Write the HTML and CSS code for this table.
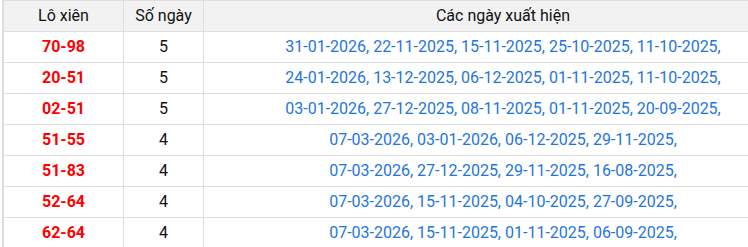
FILE: index.html
```html
<!DOCTYPE html>
<html lang="vi">
<head>
<meta charset="utf-8">
<link rel="stylesheet" href="styles.css">
</head>
<body>
<div class="wrap">
<table class="lx">
  <thead>
    <tr><th class="c1">Lô xiên</th><th class="c2">Số ngày</th><th class="c3">Các ngày xuất hiện</th></tr>
  </thead>
  <tbody>
    <tr><td class="pair">70-98</td><td class="num">5</td><td class="dates">31-01-2026, 22-11-2025, 15-11-2025, 25-10-2025, 11-10-2025,</td></tr>
    <tr><td class="pair">20-51</td><td class="num">5</td><td class="dates">24-01-2026, 13-12-2025, 06-12-2025, 01-11-2025, 11-10-2025,</td></tr>
    <tr><td class="pair">02-51</td><td class="num">5</td><td class="dates">03-01-2026, 27-12-2025, 08-11-2025, 01-11-2025, 20-09-2025,</td></tr>
    <tr><td class="pair">51-55</td><td class="num">4</td><td class="dates">07-03-2026, 03-01-2026, 06-12-2025, 29-11-2025,</td></tr>
    <tr><td class="pair">51-83</td><td class="num">4</td><td class="dates">07-03-2026, 27-12-2025, 29-11-2025, 16-08-2025,</td></tr>
    <tr><td class="pair">52-64</td><td class="num">4</td><td class="dates">07-03-2026, 15-11-2025, 04-10-2025, 27-09-2025,</td></tr>
    <tr><td class="pair">62-64</td><td class="num">4</td><td class="dates">07-03-2026, 15-11-2025, 01-11-2025, 06-09-2025,</td></tr>
  </tbody>
</table>
</div>
</body>
</html>
```
FILE: styles.css
```css
html, body {
  margin: 0;
  padding: 0;
  background: #fff;
  overflow: hidden;
}
.wrap {
  padding-left: 2px;
  width: 746px;
  height: 247px;
  overflow: hidden;
}
.lx {
  border-collapse: collapse;
  width: 801px;
  table-layout: fixed;
  font-family: Roboto, "Liberation Sans", sans-serif;
  font-size: 16px;
  color: #111;
  border-left: 2px solid #ddd;
}
.lx th, .lx td {
  border: 1px solid #ddd;
  height: 30px;
  padding: 0;
  text-align: center;
  vertical-align: middle;
  line-height: 20px;
  white-space: nowrap;
}
.lx th {
  background: #f2f2f2;
  font-weight: normal;
  color: #111;
}
.lx th.c1, .lx td.pair { border-left: 2px solid #ddd; }
.c1 { width: 119px; }
.c2 { width: 79px; }
.pair {
  color: #f00;
  font-weight: bold;
}
.num { color: #111; }
.dates { color: #1f75e0; }
```
